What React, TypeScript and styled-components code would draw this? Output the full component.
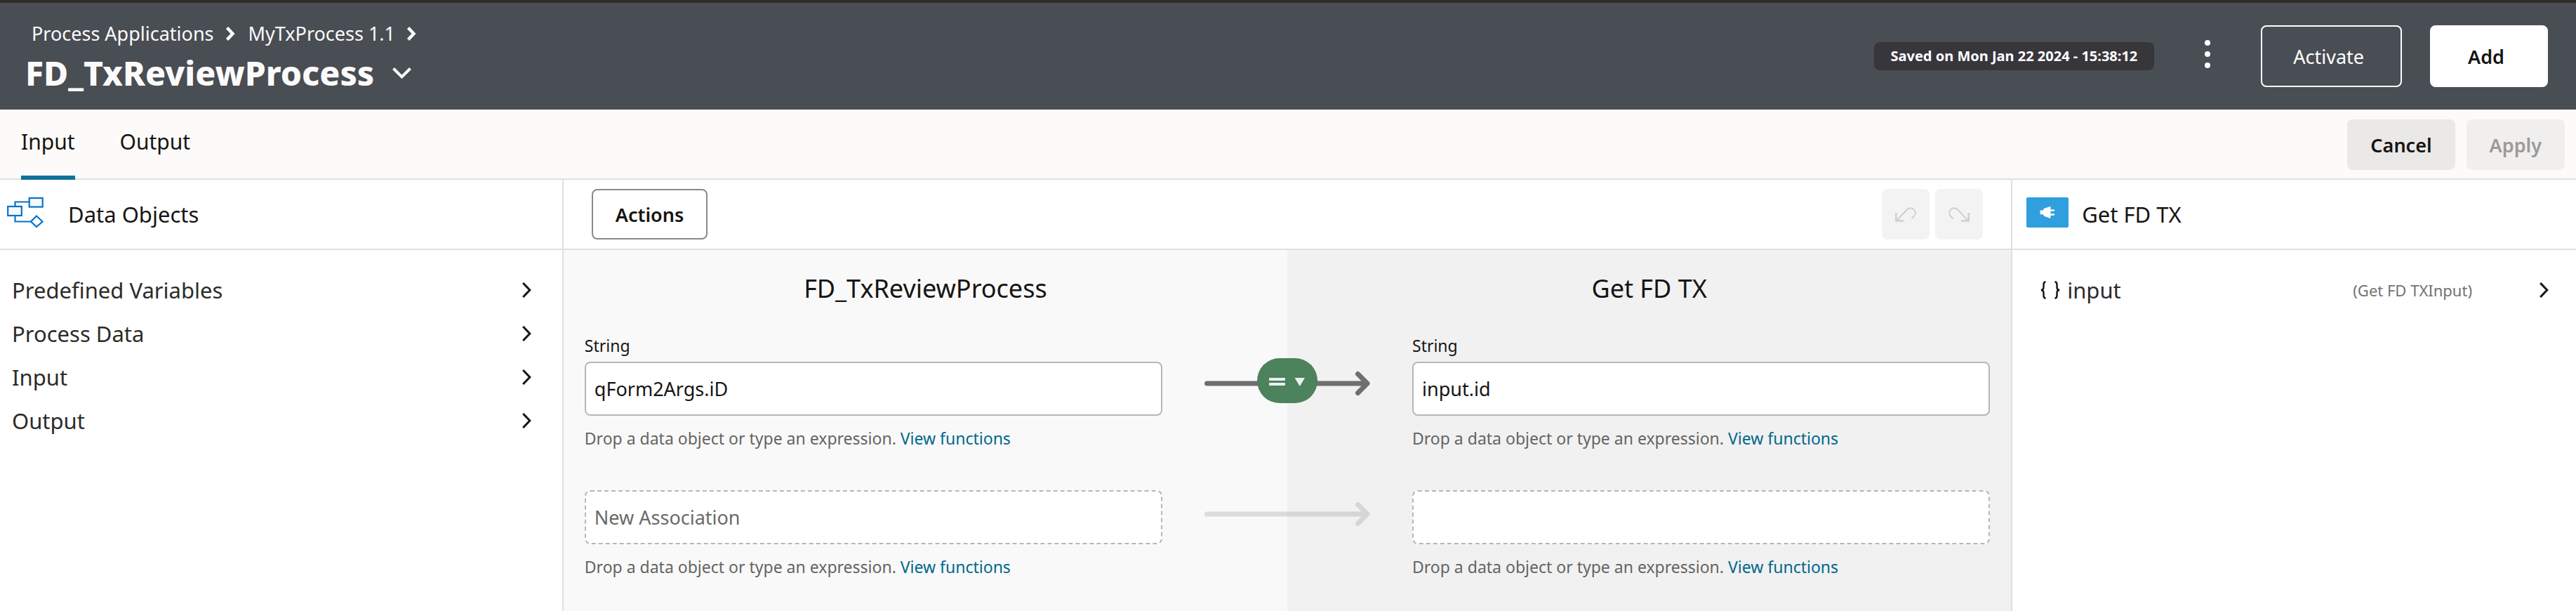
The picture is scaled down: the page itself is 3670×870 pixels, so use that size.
import React from "react";
import styled, { createGlobalStyle } from "styled-components";

const ink = "#161513";

const GlobalStyle = createGlobalStyle`
  *, *::before, *::after { box-sizing: border-box; }
  body { margin: 0; color: ${ink}; background: #fff; }
  body, button, input { font-family: "Noto Sans", "Open Sans", sans-serif; }
  h1, h2, ul, ol, p { margin: 0; padding: 0; font-weight: 400; }
  li { list-style: none; }
  a { text-decoration: none; }
  button { cursor: pointer; }
  svg { display: block; flex: none; }
`;

const Page = styled.div`
  display: flex;
  flex-direction: column;
  min-height: 100vh;
`;

const Header = styled.header`
  display: flex;
  align-items: center;
  justify-content: space-between;
  min-height: 156px;
  padding: 0 40px 0 36px;
  border-top: 4px solid #312d2a;
  background: #494d54;
  color: #fcfbfa;
`;

const Heading = styled.div`
  display: flex;
  flex-direction: column;
  align-self: flex-start;
  gap: 8px;
  padding-top: 26px;
`;

const Breadcrumb = styled.ol`
  display: flex;
  padding-left: 9px;
  font-size: 27px;
  line-height: 36px;
`;

const Crumb = styled.li`
  display: flex;
  align-items: center;
  gap: 17px;
  margin-right: 19px;
`;

const CrumbLink = styled.a`
  color: inherit;
`;

const TitleRow = styled.div`
  display: flex;
  align-items: center;
  gap: 26px;
`;

const Title = styled.h1`
  font-size: 48px;
  font-weight: 800;
  line-height: 60px;
`;

const IconButton = styled.button`
  display: flex;
  align-items: center;
  justify-content: center;
  padding: 0;
  border: 0;
  background: none;
  color: inherit;
`;

const HeaderActions = styled.div`
  display: flex;
  align-items: center;
`;

const SavedBadge = styled.span`
  padding: 0 24px;
  border-radius: 8px;
  background: #37363b;
  color: #fff;
  font-size: 20px;
  font-weight: 700;
  line-height: 40px;
`;

const MenuButton = styled(IconButton)`
  width: 72px;
  height: 88px;
  margin: 0 40px;
  padding-bottom: 6px;
`;

const HeaderButton = styled.button<{ $solid?: boolean }>`
  height: 88px;
  padding: ${(p) => (p.$solid ? "0 60px 0 52px" : "0 52px 0 44px")};
  border: 2px solid #fff;
  border-radius: 8px;
  background: ${(p) => (p.$solid ? "#fff" : "transparent")};
  color: ${(p) => (p.$solid ? ink : "#fff")};
  font-size: 27px;
  font-weight: ${(p) => (p.$solid ? 600 : 400)};
  & + & { margin-left: 40px; }
`;

const TabBar = styled.div`
  display: flex;
  align-items: stretch;
  justify-content: space-between;
  height: 100px;
  padding: 0 16px 0 30px;
  border-bottom: 2px solid #dfe2df;
  background: #fcfbf9;
`;

const Tabs = styled.div`
  display: flex;
  gap: 64px;
`;

const Tab = styled.button<{ $active?: boolean }>`
  height: 100px;
  padding: 0 0 4px;
  border: 0;
  border-bottom: 6px solid ${(p) => (p.$active ? "#10729a" : "transparent")};
  background: none;
  color: ${ink};
  font-size: 30px;
`;

const TabActions = styled.div`
  display: flex;
  align-items: flex-start;
  gap: 16px;
  padding-top: 14px;
`;

const PlainButton = styled.button`
  height: 72px;
  padding: 0 33px;
  border: 0;
  border-radius: 8px;
  background: #eae9e7;
  color: ${ink};
  font-size: 27px;
  font-weight: 600;
  &:disabled {
    background: #f0efed;
    color: #9b9a99;
  }
`;

const OutlineButton = styled.button`
  height: 72px;
  padding: 0 32px;
  border: 2px solid #8a8988;
  border-radius: 8px;
  background: #fff;
  color: ${ink};
  font-size: 27px;
  font-weight: 600;
`;

const HistoryButton = styled(IconButton)`
  width: 68px;
  height: 72px;
  border-radius: 8px;
  background: #f3f3f3;
  color: #cfcfcf;
`;

const ButtonPair = styled.div`
  display: flex;
  gap: 8px;
`;

const Workspace = styled.main`
  flex: 1;
  display: grid;
  grid-template-columns: minmax(0, 7fr) minmax(0, 18fr) minmax(0, 7fr);
`;

const Panel = styled.section<{ $divided?: boolean }>`
  display: flex;
  flex-direction: column;
  border-right: ${(p) => (p.$divided ? 2 : 0)}px solid #e0e0e0;
`;

const PanelHeader = styled.div<{ $left: number; $gap?: number }>`
  display: flex;
  align-items: center;
  gap: ${(p) => p.$gap ?? 0}px;
  height: 100px;
  padding-left: ${(p) => p.$left}px;
  border-bottom: 2px solid #e0e0e0;
`;

const Toolbar = styled(PanelHeader)`
  justify-content: space-between;
  padding-right: 40px;
`;

const PanelTitle = styled.h2`
  font-size: 31px;
`;

const PanelIcon = styled.span`
  padding-bottom: 6px;
`;

const TreeList = styled.ul`
  padding-top: 26px;
`;

const TreeRow = styled.button<{ $left: number; $right: number }>`
  display: flex;
  align-items: center;
  width: 100%;
  height: 62px;
  padding: 0 ${(p) => p.$right}px 0 ${(p) => p.$left}px;
  border: 0;
  background: none;
  color: #2c2b2a;
  font-size: 31px;
  text-align: left;
`;

const TreeName = styled.span`
  flex: 1;
`;

const BraceIcon = styled.span`
  margin-right: 10px;
  color: ${ink};
`;

const TypeName = styled.span`
  margin-right: 96px;
  color: #737271;
  font-size: 22px;
`;

const Canvas = styled.div`
  flex: 1;
  padding-top: 31px;
  background: linear-gradient(to right, #f9f9f9 50%, #f1f1f1 50%);
`;

const ColumnTitles = styled.div`
  display: grid;
  grid-template-columns: 1fr 1fr;
  margin-bottom: 42px;
  text-align: center;
`;

const ColumnTitle = styled.h2`
  font-size: 36px;
  line-height: 48px;
`;

const Mapping = styled.div`
  display: grid;
  grid-template-columns: minmax(0, 1fr) 356px minmax(0, 1fr);
  align-items: start;
  padding: 0 30px;
  & + & { margin-top: 59px; }
`;

const Field = styled.div`
  display: flex;
  flex-direction: column;
`;

const FieldLabel = styled.label`
  margin-bottom: 8px;
  font-size: 23px;
  line-height: 30px;
`;

const TextBox = styled.input<{ $empty?: boolean }>`
  width: 100%;
  height: 77px;
  padding: 0 12px;
  border: 2px ${(p) => (p.$empty ? "dashed" : "solid")} #b8b7b6;
  border-radius: 8px;
  background: #fff;
  color: ${ink};
  font-size: 27px;
  &::placeholder {
    color: #6b6a68;
    opacity: 1;
  }
`;

const Hint = styled.p`
  margin-top: 17px;
  color: #656462;
  font-size: 23px;
  line-height: 30px;
`;

const HintLink = styled.a`
  color: #00688c;
`;

const Connector = styled.div<{ $top: number }>`
  position: relative;
  display: flex;
  justify-content: center;
  margin-top: ${(p) => p.$top}px;
`;

const OperatorButton = styled.button`
  position: absolute;
  top: -18px;
  left: 50%;
  display: flex;
  align-items: center;
  justify-content: center;
  width: 86px;
  height: 64px;
  margin-left: -43px;
  padding: 4px 0 0;
  border: 0;
  border-radius: 32px;
  background: #4c825c;
`;

function ChevronRight({ heavy }: { heavy?: boolean }) {
  return heavy ? (
    <svg width="13" height="20" viewBox="0 0 13 20" fill="none" stroke="currentColor" strokeWidth="4.500">
      <path d="M1.500 1.500 9.500 10l-8 8.500" />
    </svg>
  ) : (
    <svg width="13" height="22" viewBox="0 0 13 22" fill="none" stroke={ink} strokeWidth="3">
      <path d="M1.200 1 10.800 11 1.200 21" />
    </svg>
  );
}

function ChevronDown() {
  return (
    <svg width="27" height="17" viewBox="0 0 27 17" fill="none" stroke="currentColor" strokeWidth="4">
      <path d="M1.500 1.500 13.500 13.500 25.500 1.500" />
    </svg>
  );
}

function MoreDots() {
  return (
    <svg width="8" height="40" viewBox="0 0 8 40" fill="#fff">
      <circle cx="4" cy="4" r="4" />
      <circle cx="4" cy="20" r="4" />
      <circle cx="4" cy="36" r="4" />
    </svg>
  );
}

function FlowIcon() {
  return (
    <svg width="52" height="44" viewBox="0 0 52 44" fill="none" stroke="#0572ce" strokeWidth="2.200">
      <path d="M11.500 13V7.500H31M11.500 27v8.500H34" />
      <rect x="1.200" y="14" width="19.600" height="13" fill="#f9f9f9" />
      <rect x="31.700" y="2" width="19" height="12.600" fill="#f9f9f9" />
      <path d="M42 27.500 50.500 35.500 42 43 34 35.500Z" fill="#fff" />
    </svg>
  );
}

function ConnectorIcon() {
  return (
    <svg width="60" height="43" viewBox="0 0 60 43">
      <rect width="60" height="43" rx="2" fill="#2f9fdd" />
      <path
        fill="#fff"
        d="M19.500 18.500H23.500C24.500 16 27 14.500 30.500 14.300L32.500 13.200H34.500V29.500H32.500L30.500 28.400C27 28 24.500 26.500 23.500 24.300H19.500ZM34.500 17.200H39a1.300 1.300 0 0 1 0 2.600H34.500ZM34.500 23.200H39a1.300 1.300 0 0 1 0 2.600H34.500Z"
      />
    </svg>
  );
}

function HistoryIcon({ flip }: { flip?: boolean }) {
  return (
    <svg width="30" height="21" viewBox="0 0 30 21" fill="none" stroke="currentColor" strokeWidth="2">
      <g transform={flip ? "translate(30 0) scale(-1 1)" : undefined}>
        <path strokeWidth="2.600" d="M1.300 8V19.500H12" />
        <path d="M2 19 16.500 4C20 .5 24 .6 26.600 3.300 29.500 6.500 29.500 10.500 26.500 13.300L23.500 16.200" />
      </g>
    </svg>
  );
}

function Braces() {
  return (
    <svg width="28" height="26" viewBox="0 0 28 26" fill="none" stroke="currentColor" strokeWidth="2.400">
      <path d="M7.500 1.200C5.500 1.500 4.500 2.500 4.500 5v4.500C4.500 11.500 3.500 12.600 1 13c2.500.4 3.500 1.500 3.500 3.500V21c0 2.500 1 3.500 3 3.800" />
      <path d="M20.500 1.200c2 .3 3 1.300 3 3.800v4.500c0 2 1 3.100 3.500 3.500-2.500.4-3.500 1.500-3.500 3.500V21c0 2.500-1 3.500-3 3.800" />
    </svg>
  );
}

function Arrow({ color, opacity = 1 }: { color: string; opacity?: number }) {
  return (
    <svg
      width="236"
      height="36"
      viewBox="0 0 236 36"
      fill="none"
      stroke={color}
      strokeWidth="7"
      strokeLinecap="round"
      strokeLinejoin="round"
      opacity={opacity}
    >
      <path d="M3.500 18H231M218.500 4.500 232 18 218.500 31.500" />
    </svg>
  );
}

function OperatorIcon() {
  return (
    <svg width="52" height="12" viewBox="0 0 52 12" fill="#ecf0f1">
      <rect x="0" y="0" width="23" height="4" rx="1" />
      <rect x="0" y="7" width="23" height="4" rx="1" />
      <path d="M36.500 0h14.500L43.800 12z" />
    </svg>
  );
}

function ExpressionField(props: { id: string; name: string; label?: string; value?: string; placeholder?: string }) {
  const { id, name, label, value, placeholder } = props;
  return (
    <Field>
      {label && <FieldLabel htmlFor={id}>{label}</FieldLabel>}
      <TextBox
        id={id}
        type="text"
        $empty={!value}
        defaultValue={value}
        placeholder={placeholder}
        aria-label={label ? undefined : name}
      />
      <Hint>
        Drop a data object or type an expression. <HintLink href="#functions">View functions</HintLink>
      </Hint>
    </Field>
  );
}

const dataObjects = ["Predefined Variables", "Process Data", "Input", "Output"];

export default function App() {
  return (
    <Page>
      <GlobalStyle />
      <Header>
        <Heading>
          <Breadcrumb>
            {["Process Applications", "MyTxProcess 1.1"].map((name) => (
              <Crumb key={name}>
                <CrumbLink href="#applications">{name}</CrumbLink>
                <ChevronRight heavy />
              </Crumb>
            ))}
          </Breadcrumb>
          <TitleRow>
            <Title>FD_TxReviewProcess</Title>
            <IconButton aria-label="Switch component">
              <ChevronDown />
            </IconButton>
          </TitleRow>
        </Heading>
        <HeaderActions>
          <SavedBadge>Saved on Mon Jan 22 2024 - 15:38:12</SavedBadge>
          <MenuButton aria-label="More actions">
            <MoreDots />
          </MenuButton>
          <HeaderButton>Activate</HeaderButton>
          <HeaderButton $solid>Add</HeaderButton>
        </HeaderActions>
      </Header>

      <TabBar>
        <Tabs role="tablist">
          <Tab role="tab" aria-selected="true" $active>
            Input
          </Tab>
          <Tab role="tab" aria-selected="false">
            Output
          </Tab>
        </Tabs>
        <TabActions>
          <PlainButton>Cancel</PlainButton>
          <PlainButton disabled>Apply</PlainButton>
        </TabActions>
      </TabBar>

      <Workspace>
        <Panel $divided>
          <PanelHeader $left={10} $gap={35}>
            <PanelIcon>
              <FlowIcon />
            </PanelIcon>
            <PanelTitle>Data Objects</PanelTitle>
          </PanelHeader>
          <TreeList>
            {dataObjects.map((name) => (
              <li key={name}>
                <TreeRow $left={17} $right={44}>
                  <TreeName>{name}</TreeName>
                  <ChevronRight />
                </TreeRow>
              </li>
            ))}
          </TreeList>
        </Panel>

        <Panel $divided>
          <Toolbar $left={40}>
            <OutlineButton>Actions</OutlineButton>
            <ButtonPair>
              <HistoryButton aria-label="Undo" disabled>
                <HistoryIcon />
              </HistoryButton>
              <HistoryButton aria-label="Redo" disabled>
                <HistoryIcon flip />
              </HistoryButton>
            </ButtonPair>
          </Toolbar>
          <Canvas>
            <ColumnTitles>
              <ColumnTitle>FD_TxReviewProcess</ColumnTitle>
              <ColumnTitle>Get FD TX</ColumnTitle>
            </ColumnTitles>
            <Mapping>
              <ExpressionField id="source" name="Source" label="String" value="qForm2Args.iD" />
              <Connector $top={51}>
                <Arrow color="#6f6f6f" />
                <OperatorButton aria-label="Operator">
                  <OperatorIcon />
                </OperatorButton>
              </Connector>
              <ExpressionField id="target" name="Target" label="String" value="input.id" />
            </Mapping>
            <Mapping>
              <ExpressionField id="new-source" name="New source" placeholder="New Association" />
              <Connector $top={16}>
                <Arrow color="#6f6f6f" opacity={0.2} />
              </Connector>
              <ExpressionField id="new-target" name="New target" />
            </Mapping>
          </Canvas>
        </Panel>

        <Panel>
          <PanelHeader $left={20} $gap={19}>
            <PanelIcon>
              <ConnectorIcon />
            </PanelIcon>
            <PanelTitle>Get FD TX</PanelTitle>
          </PanelHeader>
          <TreeList>
            <li>
              <TreeRow $left={40} $right={39}>
                <BraceIcon>
                  <Braces />
                </BraceIcon>
                <TreeName>input</TreeName>
                <TypeName>(Get FD TXInput)</TypeName>
                <ChevronRight />
              </TreeRow>
            </li>
          </TreeList>
        </Panel>
      </Workspace>
    </Page>
  );
}
